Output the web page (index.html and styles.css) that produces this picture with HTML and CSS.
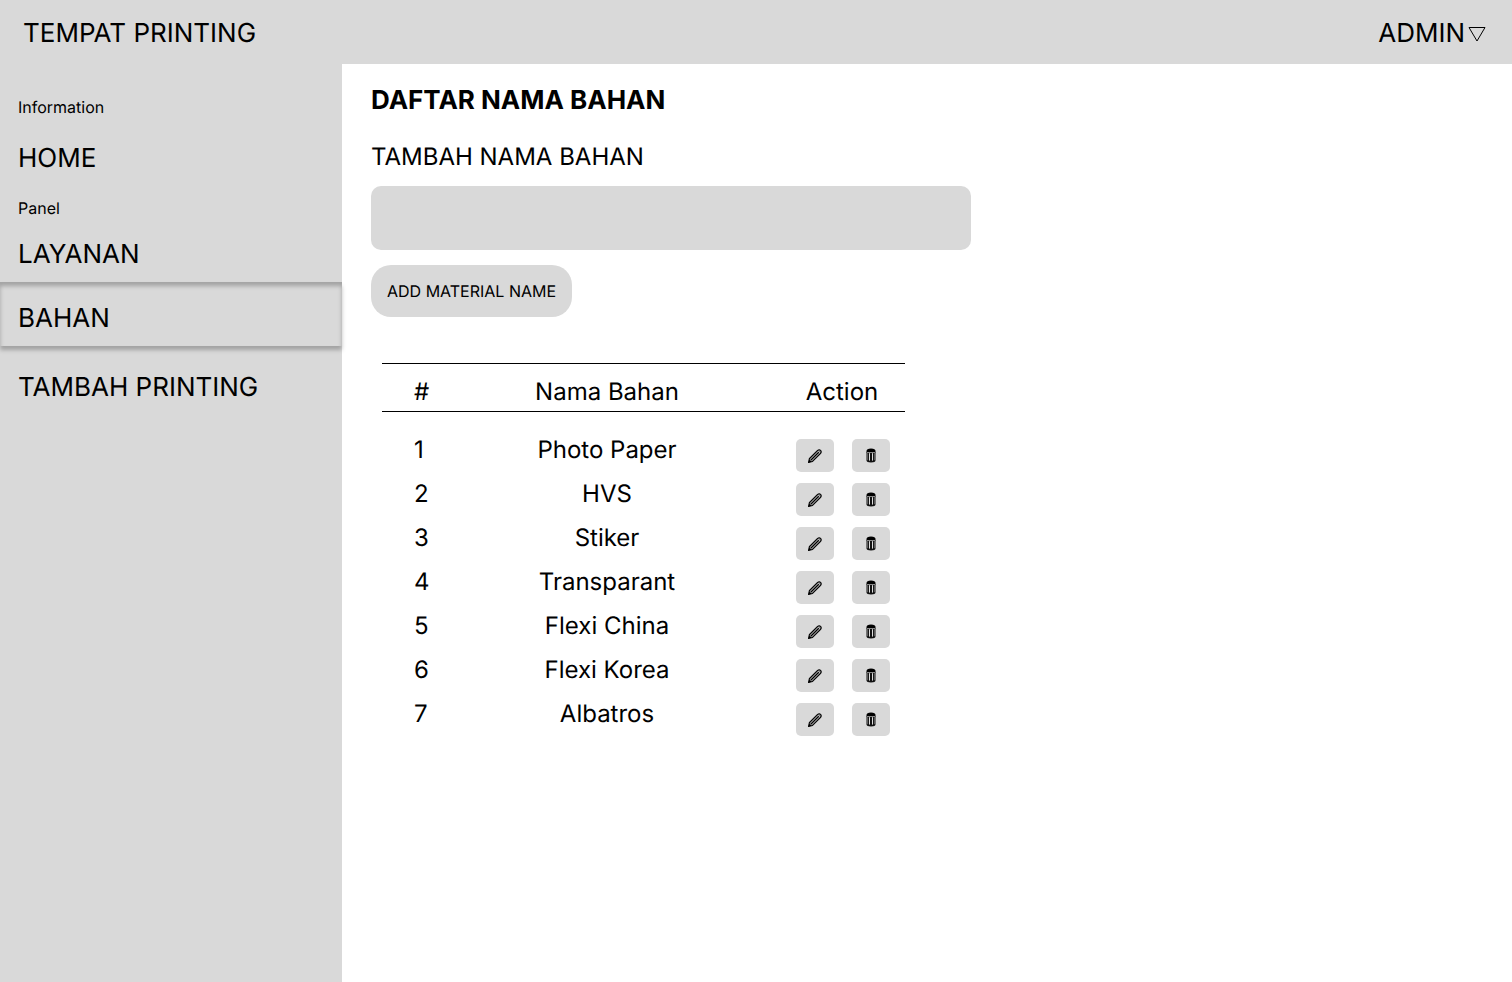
FILE: index.html
```html
<!DOCTYPE html>
<html lang="id">
<head>
<meta charset="utf-8">
<meta name="viewport" content="width=device-width, initial-scale=1">
<title>Tempat Printing - Daftar Nama Bahan</title>
<link rel="stylesheet" href="styles.css">
</head>
<body>
<svg class="sprite" aria-hidden="true">
  <symbol id="pencil" viewBox="0 0 14 14">
    <path d="M.6 13.4 1.4 9.6 9.6 1.4Q11.2.2 12.6 1.4 13.8 2.8 12.6 4.4L4.4 12.6Z" fill="#888" stroke="#000" stroke-width="1.1"/>
    <path d="M3 11 11 3" stroke="#000" stroke-width="1.2"/>
    <path d="M2.4 10.3 9.8 2.9M3.7 11.6 11.1 4.2" stroke="#aaa" stroke-width=".6"/>
    <path d="M.6 13.4 1.2 10.4 3.6 12.8Z" fill="#000"/>
    <path d="M10.2 2.3 11.7 3.8" stroke="#ddd" stroke-width="1"/>
  </symbol>
  <symbol id="trash" viewBox="0 0 10 15">
    <path d="M.5 4H9.5V12.6Q9.5 14.5 5 14.5T.5 12.6Z" fill="#111"/>
    <path d="M.5 3Q.5.5 5 .5T9.5 3V4.5H.5Z" fill="#000"/>
    <path d="M1 4.5H9" stroke="#888" stroke-width="1"/>
    <path d="M3.5 5.2V12.6M6.5 5.2V12.6" stroke="#ddd" stroke-width="1"/>
    <path d="M1.6 5.2V12.2M8.4 5.2V12.2" stroke="#888" stroke-width=".7"/>
  </symbol>
</svg>

<header class="topbar">
  <span class="brand">TEMPAT PRINTING</span>
  <button class="account" type="button">ADMIN
    <svg class="caret" viewBox="0 0 18 16" aria-hidden="true"><path d="M1 1.5H17L9 15Z" fill="none" stroke="#000"/></svg>
  </button>
</header>

<div class="layout">
  <nav class="sidebar">
    <p class="group">Information</p>
    <a class="link home" href="#home">HOME</a>
    <p class="group">Panel</p>
    <a class="link" href="#layanan">LAYANAN</a>
    <a class="link active" href="#bahan" aria-current="page">BAHAN</a>
    <a class="link" href="#tambah">TAMBAH PRINTING</a>
  </nav>

  <main class="content">
    <h1 class="title">DAFTAR NAMA BAHAN</h1>
    <form class="form">
      <label class="label" for="material">TAMBAH NAMA BAHAN</label>
      <input class="field" id="material" type="text">
      <button class="submit" type="button">ADD MATERIAL NAME</button>
    </form>

    <table class="materials">
      <thead>
        <tr><th class="num">#</th><th class="name">Nama Bahan</th><th class="action">Action</th></tr>
      </thead>
      <tbody>
        <tr><td class="num">1</td><td class="name">Photo Paper</td><td class="action"><div class="tools"><button class="tool" type="button" aria-label="Edit Photo Paper"><svg class="pencil"><use href="#pencil"/></svg></button><button class="tool" type="button" aria-label="Hapus Photo Paper"><svg class="trash"><use href="#trash"/></svg></button></div></td></tr>
        <tr><td class="num">2</td><td class="name">HVS</td><td class="action"><div class="tools"><button class="tool" type="button" aria-label="Edit HVS"><svg class="pencil"><use href="#pencil"/></svg></button><button class="tool" type="button" aria-label="Hapus HVS"><svg class="trash"><use href="#trash"/></svg></button></div></td></tr>
        <tr><td class="num">3</td><td class="name">Stiker</td><td class="action"><div class="tools"><button class="tool" type="button" aria-label="Edit Stiker"><svg class="pencil"><use href="#pencil"/></svg></button><button class="tool" type="button" aria-label="Hapus Stiker"><svg class="trash"><use href="#trash"/></svg></button></div></td></tr>
        <tr><td class="num">4</td><td class="name">Transparant</td><td class="action"><div class="tools"><button class="tool" type="button" aria-label="Edit Transparant"><svg class="pencil"><use href="#pencil"/></svg></button><button class="tool" type="button" aria-label="Hapus Transparant"><svg class="trash"><use href="#trash"/></svg></button></div></td></tr>
        <tr><td class="num">5</td><td class="name">Flexi China</td><td class="action"><div class="tools"><button class="tool" type="button" aria-label="Edit Flexi China"><svg class="pencil"><use href="#pencil"/></svg></button><button class="tool" type="button" aria-label="Hapus Flexi China"><svg class="trash"><use href="#trash"/></svg></button></div></td></tr>
        <tr><td class="num">6</td><td class="name">Flexi Korea</td><td class="action"><div class="tools"><button class="tool" type="button" aria-label="Edit Flexi Korea"><svg class="pencil"><use href="#pencil"/></svg></button><button class="tool" type="button" aria-label="Hapus Flexi Korea"><svg class="trash"><use href="#trash"/></svg></button></div></td></tr>
        <tr><td class="num">7</td><td class="name">Albatros</td><td class="action"><div class="tools"><button class="tool" type="button" aria-label="Edit Albatros"><svg class="pencil"><use href="#pencil"/></svg></button><button class="tool" type="button" aria-label="Hapus Albatros"><svg class="trash"><use href="#trash"/></svg></button></div></td></tr>
      </tbody>
    </table>
  </main>
</div>
</body>
</html>
```

FILE: styles.css
```css
* { box-sizing: border-box; }

body {
  margin: 0;
  min-height: 100vh;
  display: flex;
  flex-direction: column;
  background: #fff;
  color: #000;
  font: 26px/34px Inter, sans-serif;
  text-rendering: geometricPrecision;
}

button, input { font: inherit; color: inherit; border: 0; background: #d9d9d9; text-rendering: inherit; }
button { cursor: pointer; padding: 0; }
.sprite { display: none; }

.topbar {
  display: flex;
  align-items: center;
  justify-content: space-between;
  min-height: 64px;
  padding: 3px 26px 0 23px;
  background: #d9d9d9;
}
.account { display: flex; align-items: center; gap: 3px; }
.caret { width: 18px; height: 16px; }

.layout { flex: 1; display: flex; }

.sidebar {
  position: relative;
  z-index: 1;
  flex: 0 0 342px;
  padding-top: 33px;
  background: #d9d9d9;
}
.group { margin: 0; padding: 0 18px; font-size: 16px; line-height: 20px; }
.link { display: block; padding: 0 18px; color: inherit; text-decoration: none; }
.group + .link { margin-top: 20px; }
.group + .home { margin: 25px 0 22px; }
.link.active {
  margin: 10px 0 25px;
  padding-top: 20px;
  padding-bottom: 10px;
  box-shadow: 0 4px 4px rgba(0, 0, 0, .25), inset 0 4px 4px rgba(0, 0, 0, .25);
}

.content { flex: 1; min-width: 0; padding: 20px 29px; }
.title { margin: 0 0 23px; font-size: 26px; font-weight: 700; }
.form { display: flex; flex-direction: column; align-items: flex-start; }
.label { font-size: 24px; line-height: 32px; }
.field { width: 100%; max-width: 600px; height: 64px; margin: 13px 0 15px; padding: 0 16px; border-radius: 10px; }
.submit { padding: 16px; border-radius: 20px; font-size: 16px; line-height: 20px; }

.materials {
  width: 523px;
  max-width: 100%;
  margin: 46px 0 0 11px;
  border-collapse: separate;
  border-spacing: 0;
  table-layout: fixed;
  font-size: 24px;
}
.materials th {
  height: 49px;
  padding: 8px 0 0;
  border: solid #000;
  border-width: 1px 0;
  font-weight: 400;
}
.materials tbody::before { content: ""; display: block; height: 16px; }
.materials td { height: 44px; padding: 0; line-height: 44px; }
.materials .num { width: 80px; padding-left: 32px; text-align: left; }
.materials .name { text-align: center; }
.materials .action { width: 153px; padding-left: 27px; }
.materials td.action { padding: 0 15px 0 0; vertical-align: bottom; }

.tools { display: flex; justify-content: flex-end; gap: 18px; }
.tool { display: grid; place-items: center; width: 38px; height: 33px; border-radius: 5px; }
.pencil { width: 14px; height: 14px; }
.trash { width: 10px; height: 15px; }
```
